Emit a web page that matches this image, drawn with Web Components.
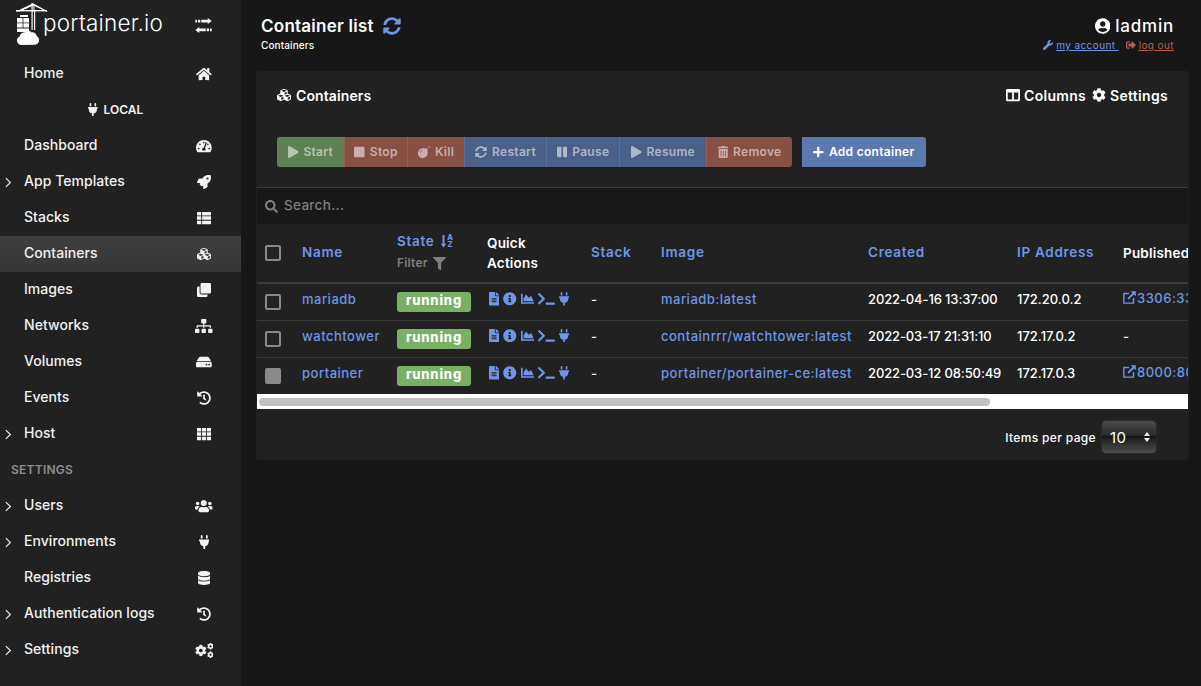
<!DOCTYPE html>
<html>
<head>
<meta charset="utf-8">
<title>Portainer</title>
<style>
  html, body { margin: 0; height: 100%; background: #171717; overflow: hidden; }
  body { font-family: Inter, "Liberation Sans", sans-serif; color: #fff; }
</style>
</head>
<body>
<pt-app></pt-app>
<script>
const ICONS = {
  home: [576, 'M280.37 148.26L96 300.11V464a16 16 0 0 0 16 16l112.06-.29a16 16 0 0 0 15.92-16V368a16 16 0 0 1 16-16h64a16 16 0 0 1 16 16v95.64a16 16 0 0 0 16 16.05L464 480a16 16 0 0 0 16-16V300L295.67 148.26a12.19 12.19 0 0 0-15.3 0zM571.6 251.47L488 182.56V44.05a12 12 0 0 0-12-12h-56a12 12 0 0 0-12 12v72.61L318.47 43a48 48 0 0 0-61 0L4.34 251.47a12 12 0 0 0-1.6 16.9l25.5 31A12 12 0 0 0 45.15 301l235.22-193.74a12.19 12.19 0 0 1 15.3 0L530.9 301a12 12 0 0 0 16.9-1.6l25.5-31a12 12 0 0 0-1.7-16.93z'],
  sync: [512, 'M370.72 133.28C339.458 104.008 298.888 87.962 255.848 88c-77.458.068-144.328 53.178-162.791 126.85-1.344 5.363-6.122 9.15-11.651 9.15H24.103c-7.498 0-13.194-6.807-11.807-14.176C33.933 94.924 134.813 8 256 8c66.448 0 126.791 26.136 171.315 68.685L463.03 40.97C478.149 25.851 504 36.559 504 57.941V192c0 13.255-10.745 24-24 24H345.941c-21.382 0-32.09-25.851-16.971-40.971l41.75-41.749zM32 296h134.059c21.382 0 32.09 25.851 16.971 40.971l-41.75 41.75c31.262 29.273 71.835 45.319 114.876 45.28 77.418-.07 144.315-53.144 162.787-126.849 1.344-5.363 6.122-9.15 11.651-9.15h57.304c7.498 0 13.194 6.807 11.807 14.176C478.067 417.076 377.187 504 256 504c-66.448 0-126.791-26.136-171.315-68.685L48.97 471.03C33.851 486.149 8 475.441 8 454.059V320c0-13.255 10.745-24 24-24z'],
  play: [448, 'M424.4 214.7L72.4 6.6C43.8-10.3 0 6.1 0 47.9V464c0 37.5 40.7 60.1 72.4 41.3l352-208c31.4-18.5 31.5-64.1 0-82.6z'],
  stop: [448, 'M400 32H48C21.5 32 0 53.5 0 80v352c0 26.5 21.5 48 48 48h352c26.5 0 48-21.5 48-48V80c0-26.5-21.5-48-48-48z'],
  pause: [448, 'M144 479H48c-26.5 0-48-21.5-48-48V79c0-26.5 21.5-48 48-48h96c26.5 0 48 21.5 48 48v352c0 26.5-21.5 48-48 48zm304-48V79c0-26.5-21.5-48-48-48h-96c-26.5 0-48 21.5-48 48v352c0 26.5 21.5 48 48 48h96c26.5 0 48-21.5 48-48z'],
  search: [512, 'M505 442.7L405.3 343c-4.5-4.5-10.6-7-17-7H372c27.6-35.3 44-79.7 44-128C416 93.1 322.9 0 208 0S0 93.1 0 208s93.1 208 208 208c48.3 0 92.7-16.4 128-44v16.3c0 6.4 2.5 12.5 7 17l99.7 99.7c9.4 9.4 24.6 9.4 33.9 0l28.3-28.3c9.4-9.4 9.4-24.6.1-34zM208 336c-70.7 0-128-57.2-128-128 0-70.7 57.2-128 128-128 70.7 0 128 57.2 128 128 0 70.7-57.2 128-128 128z'],
  plus: [448, 'M416 208H272V64c0-17.67-14.33-32-32-32h-32c-17.67 0-32 14.33-32 32v144H32c-17.67 0-32 14.33-32 32v32c0 17.67 14.33 32 32 32h144v144c0 17.67 14.33 32 32 32h32c17.67 0 32-14.33 32-32V304h144c17.67 0 32-14.33 32-32v-32c0-17.67-14.33-32-32-32z'],
  trash: [448, 'M32 464a48 48 0 0 0 48 48h288a48 48 0 0 0 48-48V128H32zm272-256a16 16 0 0 1 32 0v224a16 16 0 0 1-32 0zm-96 0a16 16 0 0 1 32 0v224a16 16 0 0 1-32 0zm-96 0a16 16 0 0 1 32 0v224a16 16 0 0 1-32 0zM432 32H312l-9.4-18.7A24 24 0 0 0 281.1 0H166.8a23.72 23.72 0 0 0-21.4 13.3L136 32H16A16 16 0 0 0 0 48v32a16 16 0 0 0 16 16h416a16 16 0 0 0 16-16V48a16 16 0 0 0-16-16z'],
  bomb: [512, 'M440.5 88.5l-52 52L415 167c9.4 9.4 9.4 24.6 0 33.9l-17.4 17.4c11.8 26.1 18.4 55.1 18.4 85.6 0 114.9-93.1 208-208 208S0 418.9 0 304 93.1 96 208 96c30.5 0 59.5 6.6 85.6 18.4L311 97c9.4-9.4 24.6-9.4 33.9 0l26.5 26.5 52-52 17.1 17zM500 60h-24c-6.6 0-12 5.4-12 12s5.4 12 12 12h24c6.6 0 12-5.4 12-12s-5.4-12-12-12zM440 0c-6.6 0-12 5.4-12 12v24c0 6.6 5.4 12 12 12s12-5.4 12-12V12c0-6.6-5.4-12-12-12zm33.9 55l17-17c4.7-4.7 4.7-12.3 0-17-4.7-4.7-12.3-4.7-17 0l-17 17c-4.7 4.7-4.7 12.3 0 17 4.8 4.7 12.4 4.7 17 0zM112 272c0-35.3 28.7-64 64-64 8.8 0 16-7.2 16-16s-7.2-16-16-16c-52.9 0-96 43.1-96 96 0 8.8 7.2 16 16 16s16-7.2 16-16z'],
  info: [512, 'M256 8C119.043 8 8 119.083 8 256c0 136.997 111.043 248 248 248s248-111.003 248-248C504 119.083 392.957 8 256 8zm0 110c23.196 0 42 18.804 42 42s-18.804 42-42 42-42-18.804-42-42 18.804-42 42-42zm56 254c0 6.627-5.373 12-12 12h-88c-6.627 0-12-5.373-12-12v-24c0-6.627 5.373-12 12-12h12v-64h-12c-6.627 0-12-5.373-12-12v-24c0-6.627 5.373-12 12-12h64c6.627 0 12 5.373 12 12v100h12c6.627 0 12 5.373 12 12v24z'],
  file: [384, 'M224 136V0H24C10.7 0 0 10.7 0 24v464c0 13.3 10.7 24 24 24h336c13.3 0 24-10.7 24-24V160H248c-13.2 0-24-10.8-24-24zm64 236c0 6.6-5.4 12-12 12H108c-6.6 0-12-5.4-12-12v-8c0-6.6 5.4-12 12-12h168c6.6 0 12 5.4 12 12v8zm0-64c0 6.6-5.4 12-12 12H108c-6.6 0-12-5.4-12-12v-8c0-6.6 5.4-12 12-12h168c6.6 0 12 5.4 12 12v8zm0-72v8c0 6.6-5.4 12-12 12H108c-6.6 0-12-5.4-12-12v-8c0-6.6 5.4-12 12-12h168c6.6 0 12 5.4 12 12zm96-114.1v6.1H256V0h6.1c6.4 0 12.5 2.5 17 7l97.9 98c4.5 4.5 7 10.6 7 16.9z'],
  chart: [512, 'M500 384c6.6 0 12 5.4 12 12v40c0 6.6-5.4 12-12 12H12c-6.6 0-12-5.4-12-12V76c0-6.6 5.4-12 12-12h40c6.6 0 12 5.4 12 12v308h436zM372.7 159.5L288 216l-85.3-113.7c-5.1-6.8-15.5-6.3-19.9 1L96 248v104h384l-89.9-187.8c-3.2-6.5-11.4-8.7-17.4-4.7z'],
  terminal: [640, 'M257.981 272.971L63.638 467.314c-9.373 9.373-24.569 9.373-33.941 0L7.029 444.647c-9.357-9.357-9.375-24.522-.04-33.901L161.011 256 6.99 101.255c-9.335-9.379-9.317-24.544.04-33.901l22.667-22.667c9.373-9.373 24.569-9.373 33.941 0L257.981 239.03c9.373 9.372 9.373 24.568 0 33.941zM640 456v-32c0-13.255-10.745-24-24-24H312c-13.255 0-24 10.745-24 24v32c0 13.255 10.745 24 24 24h304c13.255 0 24-10.745 24-24z'],
  plug: [384, 'M320,32a32,32,0,0,0-64,0v96h64Zm48,128H16A16,16,0,0,0,0,176v32a16,16,0,0,0,16,16H32v32A160.07,160.07,0,0,0,160,412.8V512h64V412.8A160.07,160.07,0,0,0,352,256V224h16a16,16,0,0,0,16-16V176A16,16,0,0,0,368,160ZM128,32a32,32,0,0,0-64,0v96h64Z'],
  database: [448, 'M448 73.143v45.714C448 159.143 347.667 192 224 192S0 159.143 0 118.857V73.143C0 32.857 100.333 0 224 0s224 32.857 224 73.143zM448 176v102.857C448 319.143 347.667 352 224 352S0 319.143 0 278.857V176c48.125 33.143 136.208 48.572 224 48.572S399.874 209.143 448 176zm0 160v102.857C448 479.143 347.667 512 224 512S0 479.143 0 438.857V336c48.125 33.143 136.208 48.572 224 48.572S399.874 369.143 448 336z'],
  cog: [512, 'M487.4 315.7l-42.6-24.6c4.3-23.2 4.3-47 0-70.2l42.6-24.6c4.9-2.8 7.1-8.6 5.5-14-11.1-35.6-30-67.8-54.7-94.6-3.8-4.1-10-5.1-14.8-2.3L380.8 110c-17.9-15.4-38.5-27.3-60.8-35.1V25.8c0-5.6-3.9-10.5-9.4-11.7-36.7-8.2-74.3-7.8-109.2 0-5.5 1.2-9.4 6.1-9.4 11.7V75c-22.2 7.9-42.8 19.8-60.8 35.1L88.7 85.5c-4.9-2.8-11-1.9-14.8 2.3-24.7 26.7-43.6 58.9-54.7 94.6-1.7 5.4.6 11.2 5.5 14L67.3 221c-4.3 23.2-4.3 47 0 70.2l-42.6 24.6c-4.9 2.8-7.1 8.6-5.5 14 11.1 35.6 30 67.8 54.7 94.6 3.8 4.1 10 5.1 14.8 2.3l42.6-24.6c17.9 15.4 38.5 27.3 60.8 35.1v49.2c0 5.6 3.9 10.5 9.4 11.7 36.7 8.2 74.3 7.8 109.2 0 5.5-1.2 9.4-6.1 9.4-11.7v-49.2c22.2-7.9 42.8-19.8 60.8-35.1l42.6 24.6c4.9 2.8 11 1.9 14.8-2.3 24.7-26.7 43.6-58.9 54.7-94.6 1.5-5.5-.7-11.3-5.6-14.1zM256 336c-44.1 0-80-35.9-80-80s35.9-80 80-80 80 35.9 80 80-35.9 80-80 80z'],
  user: [496, 'M248 8C111 8 0 119 0 256s111 248 248 248 248-111 248-248S385 8 248 8zm0 96c48.6 0 88 39.4 88 88s-39.4 88-88 88-88-39.4-88-88 39.4-88 88-88zm0 344c-58.7 0-111.3-26.6-146.5-68.2 18.8-35.4 55.6-59.8 98.5-59.8 2.4 0 4.8.4 7.1 1.1 13 4.2 26.6 6.9 40.9 6.9 14.3 0 28-2.7 40.9-6.9 2.3-.7 4.7-1.1 7.1-1.1 42.9 0 79.7 24.4 98.5 59.8C359.3 421.4 306.7 448 248 448z'],
  history: [512, 'M504 255.531c.253 136.64-111.18 248.372-247.82 248.468-59.015.042-113.223-20.53-155.822-54.911-11.077-8.94-11.905-25.541-1.839-35.607l11.267-11.267c8.609-8.609 22.353-9.551 31.891-1.984C173.062 425.135 212.781 440 256 440c101.705 0 184-82.311 184-184 0-101.705-82.311-184-184-184-48.814 0-93.149 18.969-126.068 49.932l50.754 50.754c10.08 10.08 2.941 27.314-11.313 27.314H24c-8.837 0-16-7.163-16-16V38.627c0-14.254 17.234-21.393 27.314-11.314l49.372 49.372C129.209 34.136 189.552 8 256 8c136.81 0 247.747 110.78 248 247.531zm-180.912 78.784l9.823-12.63c8.138-10.463 6.253-25.542-4.21-33.679L288 256.349V152c0-13.255-10.745-24-24-24h-16c-13.255 0-24 10.745-24 24v135.651l65.409 50.874c10.463 8.137 25.541 6.253 33.679-4.21z'],
  filter: [512, 'M487.976 0H24.028C2.71 0-8.047 25.866 7.058 40.971L192 225.941V432c0 7.831 3.821 15.17 10.237 19.662l80 55.98C298.02 518.69 320 507.493 320 487.98V225.941l184.947-184.97C520.021 25.896 509.338 0 487.976 0z'],
  columns: [512, 'M464 32H48C21.49 32 0 53.49 0 80v352c0 26.51 21.49 48 48 48h416c26.51 0 48-21.49 48-48V80c0-26.51-21.49-48-48-48zM224 416H64V160h160v256zm224 0H288V160h160v256z'],
  hdd: [576, 'M576 304v96c0 26.51-21.49 48-48 48H48c-26.51 0-48-21.49-48-48v-96c0-26.51 21.49-48 48-48h480c26.51 0 48 21.49 48 48zm-48-80a79.557 79.557 0 0 1 30.777 6.165L462.25 85.374A48.003 48.003 0 0 0 422.311 64H153.689a48 48 0 0 0-39.938 21.374L17.223 230.165A79.557 79.557 0 0 1 48 224h480zm-48 96c-17.673 0-32 14.327-32 32s14.327 32 32 32 32-14.327 32-32-14.327-32-32-32zm-96 0c-17.673 0-32 14.327-32 32s14.327 32 32 32 32-14.327 32-32-14.327-32-32-32z'],
  sitemap: [640, 'M128 352H32c-17.67 0-32 14.33-32 32v96c0 17.67 14.33 32 32 32h96c17.67 0 32-14.33 32-32v-96c0-17.67-14.33-32-32-32zm-24-80h192v48h48v-48h192v48h48v-57.59c0-21.17-17.23-38.41-38.41-38.41H344v-64h40c17.67 0 32-14.33 32-32V32c0-17.67-14.33-32-32-32H256c-17.67 0-32 14.33-32 32v96c0 17.67 14.33 32 32 32h40v64H94.41C73.23 224 56 241.23 56 262.41V320h48v-48zm264 80h-96c-17.67 0-32 14.33-32 32v96c0 17.67 14.33 32 32 32h96c17.67 0 32-14.33 32-32v-96c0-17.67-14.33-32-32-32zm240 0h-96c-17.67 0-32 14.33-32 32v96c0 17.67 14.33 32 32 32h96c17.67 0 32-14.33 32-32v-96c0-17.67-14.33-32-32-32z'],
  clone: [512, 'M464 0c26.51 0 48 21.49 48 48v288c0 26.51-21.49 48-48 48H176c-26.51 0-48-21.49-48-48V48c0-26.51 21.49-48 48-48h288M176 416c-44.112 0-80-35.888-80-80V128H48c-26.51 0-48 21.49-48 48v288c0 26.51 21.49 48 48 48h288c26.51 0 48-21.49 48-48v-48H176z'],
  thlist: [512, 'M24 32h130v128H24a24 24 0 0 1-24-24V56a24 24 0 0 1 24-24zM186 32h302a24 24 0 0 1 24 24v80a24 24 0 0 1-24 24H186zM0 192h154v128H0zM186 192h326v128H186zM0 352h154v128H24a24 24 0 0 1-24-24zM186 352h326v104a24 24 0 0 1-24 24H186z'],
  users: [640, 'M96 224c35.3 0 64-28.7 64-64s-28.7-64-64-64-64 28.7-64 64 28.7 64 64 64zm448 0c35.3 0 64-28.7 64-64s-28.7-64-64-64-64 28.7-64 64 28.7 64 64 64zm32 32h-64c-17.6 0-33.5 7.1-45.1 18.6 40.3 22.1 68.9 62 75.1 109.4h66c17.7 0 32-14.3 32-32v-32c0-35.3-28.7-64-64-64zm-256 0c61.9 0 112-50.1 112-112S381.9 32 320 32 208 82.1 208 144s50.1 112 112 112zm76.8 32h-8.3c-20.8 10-43.9 16-68.5 16s-47.6-6-68.5-16h-8.3C179.6 288 128 339.6 128 403.2V432c0 26.5 21.5 48 48 48h288c26.5 0 48-21.5 48-48v-28.8c0-63.6-51.6-115.2-115.2-115.2zm-223.7-13.4C161.5 263.1 145.6 256 128 256H64c-35.3 0-64 28.7-64 64v32c0 17.7 14.3 32 32 32h65.9c6.3-47.4 34.9-87.3 75.2-109.4z'],
  rocket: [512, 'M505.12 19.09c-1.19-5.53-6.66-11-12.21-12.18C460.72 0 435.51 0 410.41 0 307.18 0 245.27 55.2 199.05 128H94.84c-16.35.02-35.56 11.88-42.89 26.48L2.52 253.3A28.4 28.4 0 0 0 0 264a24 24 0 0 0 24.01 24h103.81l-22.47 22.47c-11.37 11.36-13 32.26 0 45.25l50.9 50.9c11.16 11.19 32.16 13.16 45.28 0l22.47-22.47V488a24 24 0 0 0 24.01 24 28.56 28.56 0 0 0 10.71-2.52l98.73-49.39c14.63-7.3 26.51-26.5 26.51-42.86V312.8c72.6-46.31 128.03-108.41 128.03-211.1.01-25.2.01-50.4-6.95-82.61zM384.04 168A40 40 0 1 1 424.05 128a40.02 40.02 0 0 1-40.01 40z'],
  tachometer: [576, 'M288 32C128.94 32 0 160.94 0 320c0 52.8 14.25 102.26 39.06 144.8 5.61 9.62 16.3 15.2 27.44 15.2h443c11.14 0 21.83-5.58 27.44-15.2C561.75 422.26 576 372.8 576 320c0-159.06-128.94-288-288-288zm0 64c14.71 0 26.58 10.13 30.32 23.65-1.11 2.26-2.64 4.23-3.45 6.67l-9.22 27.67c-5.13 3.49-10.97 6.01-17.64 6.01-17.67 0-32-14.33-32-32S270.33 96 288 96zM96 384c-17.67 0-32-14.33-32-32s14.33-32 32-32 32 14.33 32 32-14.33 32-32 32zm48-160c-17.67 0-32-14.33-32-32s14.33-32 32-32 32 14.33 32 32-14.33 32-32 32zm246.77-72.41l-61.33 184C343.13 347.33 352 364.54 352 384c0 11.72-3.38 22.55-8.88 32H232.88c-5.5-9.45-8.88-20.28-8.88-32 0-33.94 26.5-61.43 59.9-63.59l61.34-184.01c4.17-12.56 17.73-19.45 30.36-15.17 12.57 4.19 19.35 17.79 15.17 30.36zm14.66 57.2l15.52-46.55c3.47-1.29 7.13-2.23 11.05-2.23 17.67 0 32 14.33 32 32s-14.33 32-32 32c-11.38-.01-20.89-6.28-26.57-15.22zM480 384c-17.67 0-32-14.33-32-32s14.33-32 32-32 32 14.33 32 32-14.33 32-32 32z'],
  cubes: [512, 'M488.6 250.2L392 214V105.5c0-15-9.3-28.4-23.4-33.7l-100-37.5c-8.1-3.1-17.1-3.1-25.3 0l-100 37.5c-14.1 5.3-23.4 18.7-23.4 33.7V214l-96.6 36.2C9.3 255.5 0 268.9 0 283.9V394c0 13.6 7.7 26.1 19.9 32.2l100 50c10.1 5.1 22.1 5.1 32.2 0l103.9-52 103.9 52c10.1 5.1 22.1 5.1 32.2 0l100-50c12.2-6.1 19.9-18.6 19.9-32.2V283.9c0-15-9.3-28.4-23.4-33.7zM358 214.8l-85 31.9v-68.2l85-37v73.3zM154 104.1l102-38.2 102 38.2v.6l-102 41.4-102-41.4v-.6zm84 291.1l-85 42.5v-79.1l85-38.8v75.4zm0-112l-102 41.4-102-41.4v-.6l102-38.2 102 38.2v.6zm240 112l-85 42.5v-79.1l85-38.8v75.4zm0-112l-102 41.4-102-41.4v-.6l102-38.2 102 38.2v.6z'],
  wrench: [512, 'M507.73 109.1c-2.24-9.03-13.54-12.09-20.12-5.51l-74.36 74.36-67.88-11.31-11.31-67.88 74.36-74.36c6.62-6.62 3.43-17.9-5.66-20.16-47.38-11.74-99.55.91-136.58 37.93-39.64 39.64-50.55 97.1-34.05 147.2L18.74 402.76c-24.99 24.99-24.99 65.51 0 90.5 24.99 24.99 65.51 24.99 90.5 0l213.21-213.21c50.12 16.71 107.47 5.68 147.37-34.22 37.07-37.07 49.7-89.32 37.91-136.73z'],
  signout: [512, 'M497 273L329 441c-15 15-41 4.5-41-17v-96H152c-13.3 0-24-10.7-24-24v-96c0-13.3 10.7-24 24-24h136V88c0-21.4 25.9-32 41-17l168 168c9.3 9.4 9.3 24.6 0 34zM192 436v-40c0-6.6-5.4-12-12-12H96c-17.7 0-32-14.3-32-32V160c0-17.7 14.3-32 32-32h84c6.6 0 12-5.4 12-12V76c0-6.6-5.4-12-12-12H96c-53 0-96 43-96 96v192c0 53 43 96 96 96h84c6.6 0 12-5.4 12-12z'],
  exchange: [512, 'M384 30l120 92-120 92v-50H190V80h194zM160 80v84H88V80zM60 80v84H16a8 8 0 0 1-8-8V88a8 8 0 0 1 8-8zM128 298L8 390l120 92v-50h194v-84H128zM352 348v84h72v-84zM452 348v84h44a8 8 0 0 0 8-8v-68a8 8 0 0 0-8-8z'],
  grid: [512, 'M0 32h150v128H0zM181 32h150v128H181zM362 32h150v128H362zM0 192h150v128H0zM181 192h150v128H181zM362 192h150v128H362zM0 352h150v128H0zM181 352h150v128H181zM362 352h150v128H362z'],
  external: [512, 'M40 96h200v48H88v280h280V272h48v200H40zM296 40h176v176l-64-64-176 176-48-48 176-176z'],
  chevron: [320, 'M60 30L290 256 60 482 20 442 210 256 20 70z']
};

// tiny shared helper, each element gets its own shadow root and style
function shadow(el, html) {
  const root = el.attachShadow({ mode: 'open' });
  const template = document.createElement('template');
  template.innerHTML = html;
  root.appendChild(template.content.cloneNode(true));
  return root;
}

class PtIcon extends HTMLElement {
  connectedCallback() {
    const name = this.getAttribute('name');
    const size = this.getAttribute('size') || 14;
    let body, vw = 512;
    if (name === 'cogs') {
      // gros engrenage + deux petits
      vw = 640;
      const c = ICONS.cog[1];
      body = `<path transform="translate(0 56) scale(.78)" d="${c}"/>
        <path transform="translate(412 -6) scale(.46)" d="${c}"/>
        <path transform="translate(412 282) scale(.46)" d="${c}"/>`;
    } else if (name === 'sort') {
      vw = 640;
      body = `<path d="M130 40h70v320h70L165 490 60 360h70z"/>
        <text x="300" y="220" font-size="270" font-weight="800" font-family="Inter, sans-serif">A</text>
        <text x="315" y="490" font-size="270" font-weight="800" font-family="Inter, sans-serif">Z</text>`;
    } else {
      const icon = ICONS[name];
      vw = icon[0];
      body = `<path d="${icon[1]}"/>`;
    }
    shadow(this, `
      <style>
        :host { display: inline-flex; align-items: center; justify-content: center; line-height: 0; }
        svg { fill: currentColor; height: ${size}px; width: auto; display: block; }
      </style>
      <svg viewBox="0 0 ${vw} 512">${body}</svg>`);
  }
}
customElements.define('pt-icon', PtIcon);

class PtLogo extends HTMLElement {
  connectedCallback() {
    shadow(this, `
      <style>
        :host { display: flex; align-items: flex-start; height: 56px; padding-left: 16px; box-sizing: border-box; }
        svg { width: 32px; height: 46px; flex: none; margin-top: 1px; }
        span { font: 300 22.5px Inter, "Liberation Sans", sans-serif; letter-spacing: .2px; color: #fff; margin: 10px 0 0 -5px; line-height: 26px; }
      </style>
      <svg viewBox="0 0 32 46" fill="#fff">
        <path d="M0 10.4 17 2.2l15 8.2H30L18.5 4.9v5.5h-1V4.6L4 10.4z"/>
        <rect x="0" y="9" width="31" height="1.4"/>
        <rect x="15.5" y="2" width="1.2" height="27"/>
        <rect x="18" y="9" width="1.2" height="20"/>
        <path d="M1 17h5.6v4.4H1zM7.4 17H13v4.4H7.4zM1 22.2h5.6v4.4H1zM7.4 22.2H13v4.4H7.4zM1 27.4h12V31H1z"/>
        <path d="M4 14h8v2H4z"/>
        <path d="M6 44c-3 0-5-2-5-4.6 0-2 1-3.4 2.7-4 .2-2.6 2.6-4.4 5.4-4.2 1.6-1.6 5-1.6 6.4.2 2.6-.4 5 1.4 5.2 3.8 1.6.6 2.4 2 2.4 3.8 0 2.8-2.2 4.8-5 4.8z"/>
      </svg>
      <span>portainer.io</span>`);
  }
}
customElements.define('pt-logo', PtLogo);

class PtNavItem extends HTMLElement {
  connectedCallback() {
    const caret = this.hasAttribute('caret');
    shadow(this, `
      <style>
        :host { display: flex; align-items: center; height: 36px; padding-right: 25px; font-size: var(--nav-size); font-weight: 500; letter-spacing: var(--nav-track); color: #f2f2f2; }
        :host([active]) { background: linear-gradient(#3e3e3e, #373737); }
        .caret { width: 24px; flex: none; display: flex; padding-left: 5px; box-sizing: border-box; color: #eee; }
        .label { flex: 1; white-space: nowrap; padding-bottom: 4px; }
        .icon { width: 24px; flex: none; display: flex; justify-content: center; }
      </style>
      <span class="caret">${caret ? '<pt-icon name="chevron" size="11"></pt-icon>' : ''}</span>
      <span class="label"><slot></slot></span>
      <span class="icon"><pt-icon name="${this.getAttribute('icon')}" size="${this.getAttribute('size') || 14}"></pt-icon></span>`);
  }
}
customElements.define('pt-nav-item', PtNavItem);

class PtSidebar extends HTMLElement {
  connectedCallback() {
    shadow(this, `
      <style>
        :host { display: block; width: 241px; flex: none; background: #212121; height: 686px; overflow: hidden; --nav-size: 14px; --nav-track: .05px; }
        .top { position: relative; }
        .toggle { position: absolute; top: 17px; left: 195px; color: #f2f2f2; }
        .env { height: 36px; box-sizing: border-box; padding: 0 10px 2px 0; display: flex; align-items: center; justify-content: center; gap: 6px; font-size: 12px; font-weight: 600; color: #f2f2f2; }
        .head { height: 36px; box-sizing: border-box; display: flex; align-items: center; padding: 0 0 2px 11px; font-size: 12px; font-weight: 600; letter-spacing: .25px; color: #8d8d8d; }
      </style>
      <div class="top"><pt-logo></pt-logo><pt-icon class="toggle" name="exchange" size="17"></pt-icon></div>
      <pt-nav-item icon="home">Home</pt-nav-item>
      <div class="env"><pt-icon name="plug" size="13"></pt-icon><span>LOCAL</span></div>
      <pt-nav-item icon="tachometer">Dashboard</pt-nav-item>
      <pt-nav-item icon="rocket" caret>App Templates</pt-nav-item>
      <pt-nav-item icon="thlist">Stacks</pt-nav-item>
      <pt-nav-item icon="cubes" active>Containers</pt-nav-item>
      <pt-nav-item icon="clone">Images</pt-nav-item>
      <pt-nav-item icon="sitemap">Networks</pt-nav-item>
      <pt-nav-item icon="hdd">Volumes</pt-nav-item>
      <pt-nav-item icon="history">Events</pt-nav-item>
      <pt-nav-item icon="grid" caret>Host</pt-nav-item>
      <div class="head">SETTINGS</div>
      <pt-nav-item icon="users" caret>Users</pt-nav-item>
      <pt-nav-item icon="plug" caret>Environments</pt-nav-item>
      <pt-nav-item icon="database">Registries</pt-nav-item>
      <pt-nav-item icon="history" caret>Authentication logs</pt-nav-item>
      <pt-nav-item icon="cogs" size="15" caret>Settings</pt-nav-item>`);
  }
}
customElements.define('pt-sidebar', PtSidebar);

class PtHeader extends HTMLElement {
  connectedCallback() {
    shadow(this, `
      <style>
        :host { display: flex; justify-content: space-between; height: 71px; box-sizing: border-box; padding: 15px 15px 0 5px; }
        h1 { margin: 0; font-size: 17px; font-weight: 600; line-height: 22px; display: flex; align-items: center; gap: 9px; letter-spacing: .25px; }
        h1 pt-icon { color: #6f96e6; }
        .crumb { font-size: 10px; font-weight: 500; margin-top: 1px; line-height: 14px; letter-spacing: .1px; }
        .right { text-align: right; }
        .name { font-size: 17px; font-weight: 500; line-height: 22px; display: flex; justify-content: flex-end; align-items: center; gap: 5px; letter-spacing: .8px; }
        .links { font-size: 10px; margin-top: 1px; line-height: 14px; display: flex; justify-content: flex-end; align-items: center; gap: 7px; letter-spacing: .4px; }
        a { text-decoration: underline; display: inline-flex; gap: 3px; align-items: center; }
        .acc { color: #6f96e6; }
        .out { color: #b4604f; }
      </style>
      <div>
        <h1>Container list <pt-icon name="sync" size="18"></pt-icon></h1>
        <div class="crumb">Containers</div>
      </div>
      <div class="right">
        <div class="name"><pt-icon name="user" size="16"></pt-icon><span>ladmin</span></div>
        <div class="links">
          <a class="acc"><pt-icon name="wrench" size="10"></pt-icon> my account&nbsp;</a>
          <a class="out"><pt-icon name="signout" size="10"></pt-icon> log out</a>
        </div>
      </div>`);
  }
}
customElements.define('pt-header', PtHeader);

class PtButton extends HTMLElement {
  connectedCallback() {
    shadow(this, `
      <style>
        :host { display: flex; align-items: center; justify-content: center; gap: 5px; height: 30px; box-sizing: border-box; width: ${this.getAttribute('w')}px; font-size: 12px; font-weight: 600; letter-spacing: .3px; color: rgba(255,255,255,.55); background: var(--bg); border-left: 1px solid rgba(255,255,255,.1); }
        :host([add]) { color: #fff; border-left: 0; border-radius: 3px; }
        :host(:first-child) { border-radius: 3px 0 0 3px; border-left: 0; }
        :host(:last-child) { border-radius: 0 3px 3px 0; }
        span { padding-bottom: 1px; }
      </style>
      <pt-icon name="${this.getAttribute('icon')}" size="12"></pt-icon><span><slot></slot></span>`);
  }
}
customElements.define('pt-button', PtButton);

class PtContainerTable extends HTMLElement {
  connectedCallback() {
    const rows = [
      ['mariadb', 'mariadb:latest', '2022-04-16 13:37:00', '172.20.0.2', '3306:3306'],
      ['watchtower', 'containrrr/watchtower:latest', '2022-03-17 21:31:10', '172.17.0.2', ''],
      ['portainer', 'portainer/portainer-ce:latest', '2022-03-12 08:50:49', '172.17.0.3', '8000:8000']
    ];
    const actions = `
      <span class="quick"><pt-icon name="file" size="13.5"></pt-icon><pt-icon name="info" size="13.5"></pt-icon><pt-icon name="chart" size="13.5"></pt-icon><pt-icon name="terminal" size="13.5"></pt-icon><pt-icon name="plug" size="13.5"></pt-icon></span>`;
    const body = rows.map((r, i) => `
      <tr>
        <td><i class="check ${i === 2 ? 'off' : ''}"></i></td>
        <td class="link">${r[0]}</td>
        <td><b class="badge">running</b></td>
        <td>${actions}</td>
        <td>-</td>
        <td class="link">${r[1]}</td>
        <td class="date">${r[2]}</td>
        <td class="ip">${r[3]}</td>
        <td class="${r[4] ? 'link' : ''}">${r[4] ? `<span class="pub"><pt-icon name="external" size="15"></pt-icon>${r[4]}</span>` : '-'}</td>
      </tr>`).join('');
    shadow(this, `
      <style>
        :host { display: block; overflow: hidden; margin: 0 1px; font-size: 13px; font-weight: 500; letter-spacing: .2px; }
        table { border-collapse: collapse; table-layout: fixed; width: 1000px; }
        th, td { padding: 0 0 0 8px; text-align: left; white-space: nowrap; overflow: hidden; }
        th { height: 55px; border-bottom: 2px solid #3a3a3a; font-weight: 600; font-size: 13.5px; line-height: 20px; white-space: normal; }
        th.link { letter-spacing: .7px; padding-bottom: 2px; }
        th.state { padding-bottom: 3px; }
        td { border-bottom: 1px solid #383838; padding-bottom: 6px; box-sizing: border-box; height: 37px; }
        tr:last-child td { border-bottom: 0; }
        .link { color: #6f96e6; }
        td.link { letter-spacing: .5px; }
        td.date { letter-spacing: -.12px; }
        td.ip { letter-spacing: 0; }
        .check { display: block; width: 12px; height: 12px; border: 2px solid #8a8a8a; border-radius: 2px; background: #232323; margin-top: 6px; }
        .check.off { background: #8a8a8a; }
        th .check { margin-top: 0; }
        .badge { display: block; margin-top: 6px; width: 74px; height: 20px; line-height: 17px; text-align: center; background: #7ab066; border-radius: 3px; font-size: 13px; font-weight: 800; letter-spacing: .8px; }
        .quick { display: flex; align-items: center; gap: 4px; padding-left: 2px; color: #6f96e6; }
        .sort { display: flex; gap: 5px; align-items: center; color: #6f96e6; letter-spacing: .7px; }
        .filter { display: flex; align-items: center; gap: 5px; color: #7f7f7f; font-size: 12px; margin-top: 3px; line-height: 18px; }
        .pub { display: inline-flex; align-items: center; margin-left: -1px; }
      </style>
      <table>
        <colgroup>
          <col style="width:37px"><col style="width:95px"><col style="width:90px"><col style="width:104px"><col style="width:70px"><col style="width:207px"><col style="width:149px"><col style="width:106px"><col style="width:142px">
        </colgroup>
        <thead>
          <tr>
            <th><i class="check"></i></th>
            <th class="link">Name</th>
            <th class="state"><div class="sort">State <pt-icon name="sort" size="14"></pt-icon></div><div class="filter">Filter <pt-icon name="filter" size="13"></pt-icon></div></th>
            <th>Quick<br>Actions</th>
            <th class="link">Stack</th>
            <th class="link">Image</th>
            <th class="link">Created</th>
            <th class="link">IP Address</th>
            <th>Published Ports</th>
          </tr>
        </thead>
        <tbody>${body}</tbody>
      </table>`);
  }
}
customElements.define('pt-container-table', PtContainerTable);

class PtContainersCard extends HTMLElement {
  connectedCallback() {
    shadow(this, `
      <style>
        :host { display: block; background: #212121; border-radius: 3px; font-size: 13.5px; }
        .title { height: 50px; box-sizing: border-box; padding: 0 21px 2px; display: flex; align-items: center; justify-content: space-between; font-size: 14px; font-weight: 600; letter-spacing: .1px; }
        .title div { display: flex; align-items: center; gap: 5px; }
        .title .tools { gap: 4px; letter-spacing: .3px; }
        .tools pt-icon:nth-of-type(2) { margin-left: 2px; }
        .actions { display: flex; padding: 16px 0 20px 21px; gap: 10px; }
        .group { display: flex; }
        .search { border-top: 1px solid #3a3a3a; height: 36px; margin: 0 1px; background: #181818; display: flex; align-items: center; gap: 6px; padding-left: 8px; color: #7f7f7f; font-size: 13.5px; font-weight: 500; letter-spacing: .3px; }
        .search span { padding-bottom: 2px; }
        .scroll { height: 15px; margin: 0 1px; background: #fff; display: flex; align-items: center; padding-left: 2px; }
        .scroll i { display: block; width: 731px; height: 8px; border-radius: 4px; background: #c1c1c1; }
        .foot { height: 51px; box-sizing: border-box; padding: 5px 32px 0 0; display: flex; align-items: center; justify-content: flex-end; gap: 5px; font-size: 12px; font-weight: 500; letter-spacing: .35px; }
        .select { width: 56px; height: 34px; box-sizing: border-box; border: 1px solid #2b2b2b; border-radius: 5px; background: linear-gradient(#4a4a4a, #2c2c2c 44%, #141414 48%, #262626 60%, #4d4d4d); display: flex; align-items: center; justify-content: space-between; padding: 0 6px 0 8px; font-size: 15px; font-weight: 400; }
        .arrows { display: flex; flex-direction: column; gap: 2px; }
        .arrows i { display: block; width: 0; height: 0; border: 3px solid transparent; }
        .arrows i:first-child { border-bottom: 4px solid #eee; border-top: 0; }
        .arrows i:last-child { border-top: 4px solid #eee; border-bottom: 0; }
      </style>
      <div class="title">
        <div><pt-icon name="cubes" size="14"></pt-icon><span>Containers</span></div>
        <div class="tools"><pt-icon name="columns" size="14"></pt-icon><span>Columns</span><pt-icon name="cog" size="14"></pt-icon><span>Settings</span></div>
      </div>
      <div class="actions">
        <div class="group">
          <pt-button w="67" icon="play" style="--bg:#5e8055">Start</pt-button>
          <pt-button w="63" icon="stop" style="--bg:#884f44">Stop</pt-button>
          <pt-button w="57" icon="bomb" style="--bg:#884f44">Kill</pt-button>
          <pt-button w="82" icon="sync" style="--bg:#4b6089">Restart</pt-button>
          <pt-button w="73" icon="pause" style="--bg:#4b6089">Pause</pt-button>
          <pt-button w="87" icon="play" style="--bg:#4b6089">Resume</pt-button>
          <pt-button w="86" icon="trash" style="--bg:#884f44">Remove</pt-button>
        </div>
        <pt-button add w="124" icon="plus" style="--bg:#5c7ab0">Add container</pt-button>
      </div>
      <div class="search"><pt-icon name="search" size="13"></pt-icon><span>Search...</span></div>
      <pt-container-table></pt-container-table>
      <div class="scroll"><i></i></div>
      <div class="foot"><span>Items per page</span><div class="select"><span>10</span><span class="arrows"><i></i><i></i></span></div></div>`);
  }
}
customElements.define('pt-containers-card', PtContainersCard);

class PtApp extends HTMLElement {
  connectedCallback() {
    shadow(this, `
      <style>
        :host { display: flex; height: 686px; }
        main { flex: 1; min-width: 0; padding: 0 12px 0 15px; }
      </style>
      <pt-sidebar></pt-sidebar>
      <main>
        <pt-header></pt-header>
        <pt-containers-card></pt-containers-card>
      </main>`);
  }
}
customElements.define('pt-app', PtApp);
</script>
</body>
</html>
